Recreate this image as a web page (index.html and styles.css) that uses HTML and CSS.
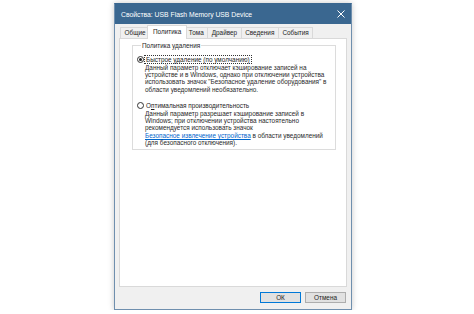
FILE: index.html
```html
<!DOCTYPE html>
<html lang="ru">
<head>
  <meta charset="UTF-8" />
  <title>Свойства: USB Flash Memory USB Device</title>
  <link rel="stylesheet" href="styles.css">
</head>
<body>

  <div class="stage">
    <div class="window">
      <div class="titlebar">
        <span class="title">Свойства: USB Flash Memory USB Device</span>
        <svg class="close" width="8" height="8" viewBox="0 0 8 8">
          <path d="M0.5 0.5 L7.5 7.5 M7.5 0.5 L0.5 7.5" stroke="#fff" stroke-width="1" fill="none"/>
        </svg>
      </div>

      <div class="tabs">
        <div class="tab">Общие</div>
        <div class="tab active">Политика</div>
        <div class="tab">Тома</div>
        <div class="tab">Драйвер</div>
        <div class="tab">Сведения</div>
        <div class="tab">События</div>
      </div>

      <div class="page">
        <fieldset class="group">
          <legend>Политика удаления</legend>

          <div class="option">
            <span class="radio checked"></span>
            <span class="label focus">Быстрое удаление (по умолчанию)</span>
          </div>
          <p class="desc">
            Данный параметр отключает кэширование записей на<br>
            устройстве и в Windows, однако при отключении устройства<br>
            использовать значок "Безопасное удаление оборудования" в<br>
            области уведомлений необязательно.
          </p>

          <div class="option">
            <span class="radio"></span>
            <span class="label">О<u>п</u>тимальная производительность</span>
          </div>
          <p class="desc">
            Данный параметр разрешает кэширование записей в<br>
            Windows; при отключении устройства настоятельно<br>
            рекомендуется использовать значок<br>
            <a href="#" class="link">Безопасное извлечение устройства</a> в области уведомлений<br>
            (для безопасного отключения).
          </p>
        </fieldset>
      </div>

      <div class="buttons">
        <button class="btn default">ОК</button>
        <button class="btn">Отмена</button>
      </div>
    </div>
  </div>

</body>
</html>
```

FILE: styles.css
```css
html, body {
  margin: 0;
  padding: 0;
  background: #ffffff;
  font-family: "Liberation Sans", Arial, sans-serif;
  font-size: 6.4px;
  color: #1e1e1e;
  white-space: nowrap;
}

.stage {
  display: flex;
  padding: 3px 0 0 114px;
}

.window {
  width: 236px;
  height: 305px;
  display: flex;
  flex-direction: column;
  background: #f0f0f0;
  border: 1px solid #6f8fae;
  border-top-color: #3a6790;
  box-shadow: 0 0 6px rgba(0, 0, 0, 0.22);
}

.titlebar {
  height: 20px;
  flex: none;
  display: flex;
  align-items: center;
  justify-content: space-between;
  padding: 0 6px 0 6px;
  background: #3a6790;
  color: #ffffff;
  font-size: 6.8px;
}

.tabs {
  display: flex;
  align-items: flex-end;
  height: 14px;
  padding: 0 0 0 6px;
  flex: none;
}

.tab {
  height: 10px;
  line-height: 10px;
  padding: 0 3.5px;
  border: 1px solid #d9d9d9;
  border-bottom: none;
  margin-left: -1px;
  background: #f0f0f0;
}

.tab.active {
  height: 13px;
  line-height: 12px;
  padding: 0 5px;
  margin: 0 -2px -1px -3px;
  background: #ffffff;
  position: relative;
  z-index: 1;
}

.page {
  flex: 1;
  margin: 0 4px;
  padding: 3px 10px 0 12px;
  background: #ffffff;
  border: 1px solid #d9d9d9;
}

.group {
  margin: 0;
  padding: 5px 4px 2px 4px;
  border: 1px solid #dcdcdc;
}

.group legend {
  padding: 0 1px;
  margin-left: 4px;
  line-height: 7px;
}

.option {
  display: flex;
  align-items: center;
  height: 8px;
  margin-top: 1px;
}

.radio {
  width: 5px;
  height: 5px;
  border: 1px solid #333333;
  border-radius: 50%;
  background: #ffffff;
  display: flex;
  align-items: center;
  justify-content: center;
  flex: none;
}

.radio.checked::after {
  content: "";
  width: 3px;
  height: 3px;
  border-radius: 50%;
  background: #1e1e1e;
}

.label {
  margin-left: 1px;
  padding: 0 1px;
  line-height: 7px;
}

.label.focus {
  outline: 1px dotted #333333;
}

.desc {
  margin: 0.5px 0 8px 8px;
  line-height: 7.4px;
  color: #2a2a2a;
}

.desc:last-child {
  margin-bottom: 0;
}

.link {
  color: #0066cc;
  text-decoration: underline;
}

.buttons {
  flex: none;
  display: flex;
  justify-content: flex-end;
  gap: 4px;
  padding: 5px 5px 6px;
}

.btn {
  width: 41px;
  height: 11px;
  padding: 0;
  font-family: "Liberation Sans", Arial, sans-serif;
  font-size: 6.4px;
  line-height: 9px;
  color: #1e1e1e;
  background: #e1e1e1;
  border: 1px solid #adadad;
}

.btn.default {
  border-color: #0078d7;
}
```
